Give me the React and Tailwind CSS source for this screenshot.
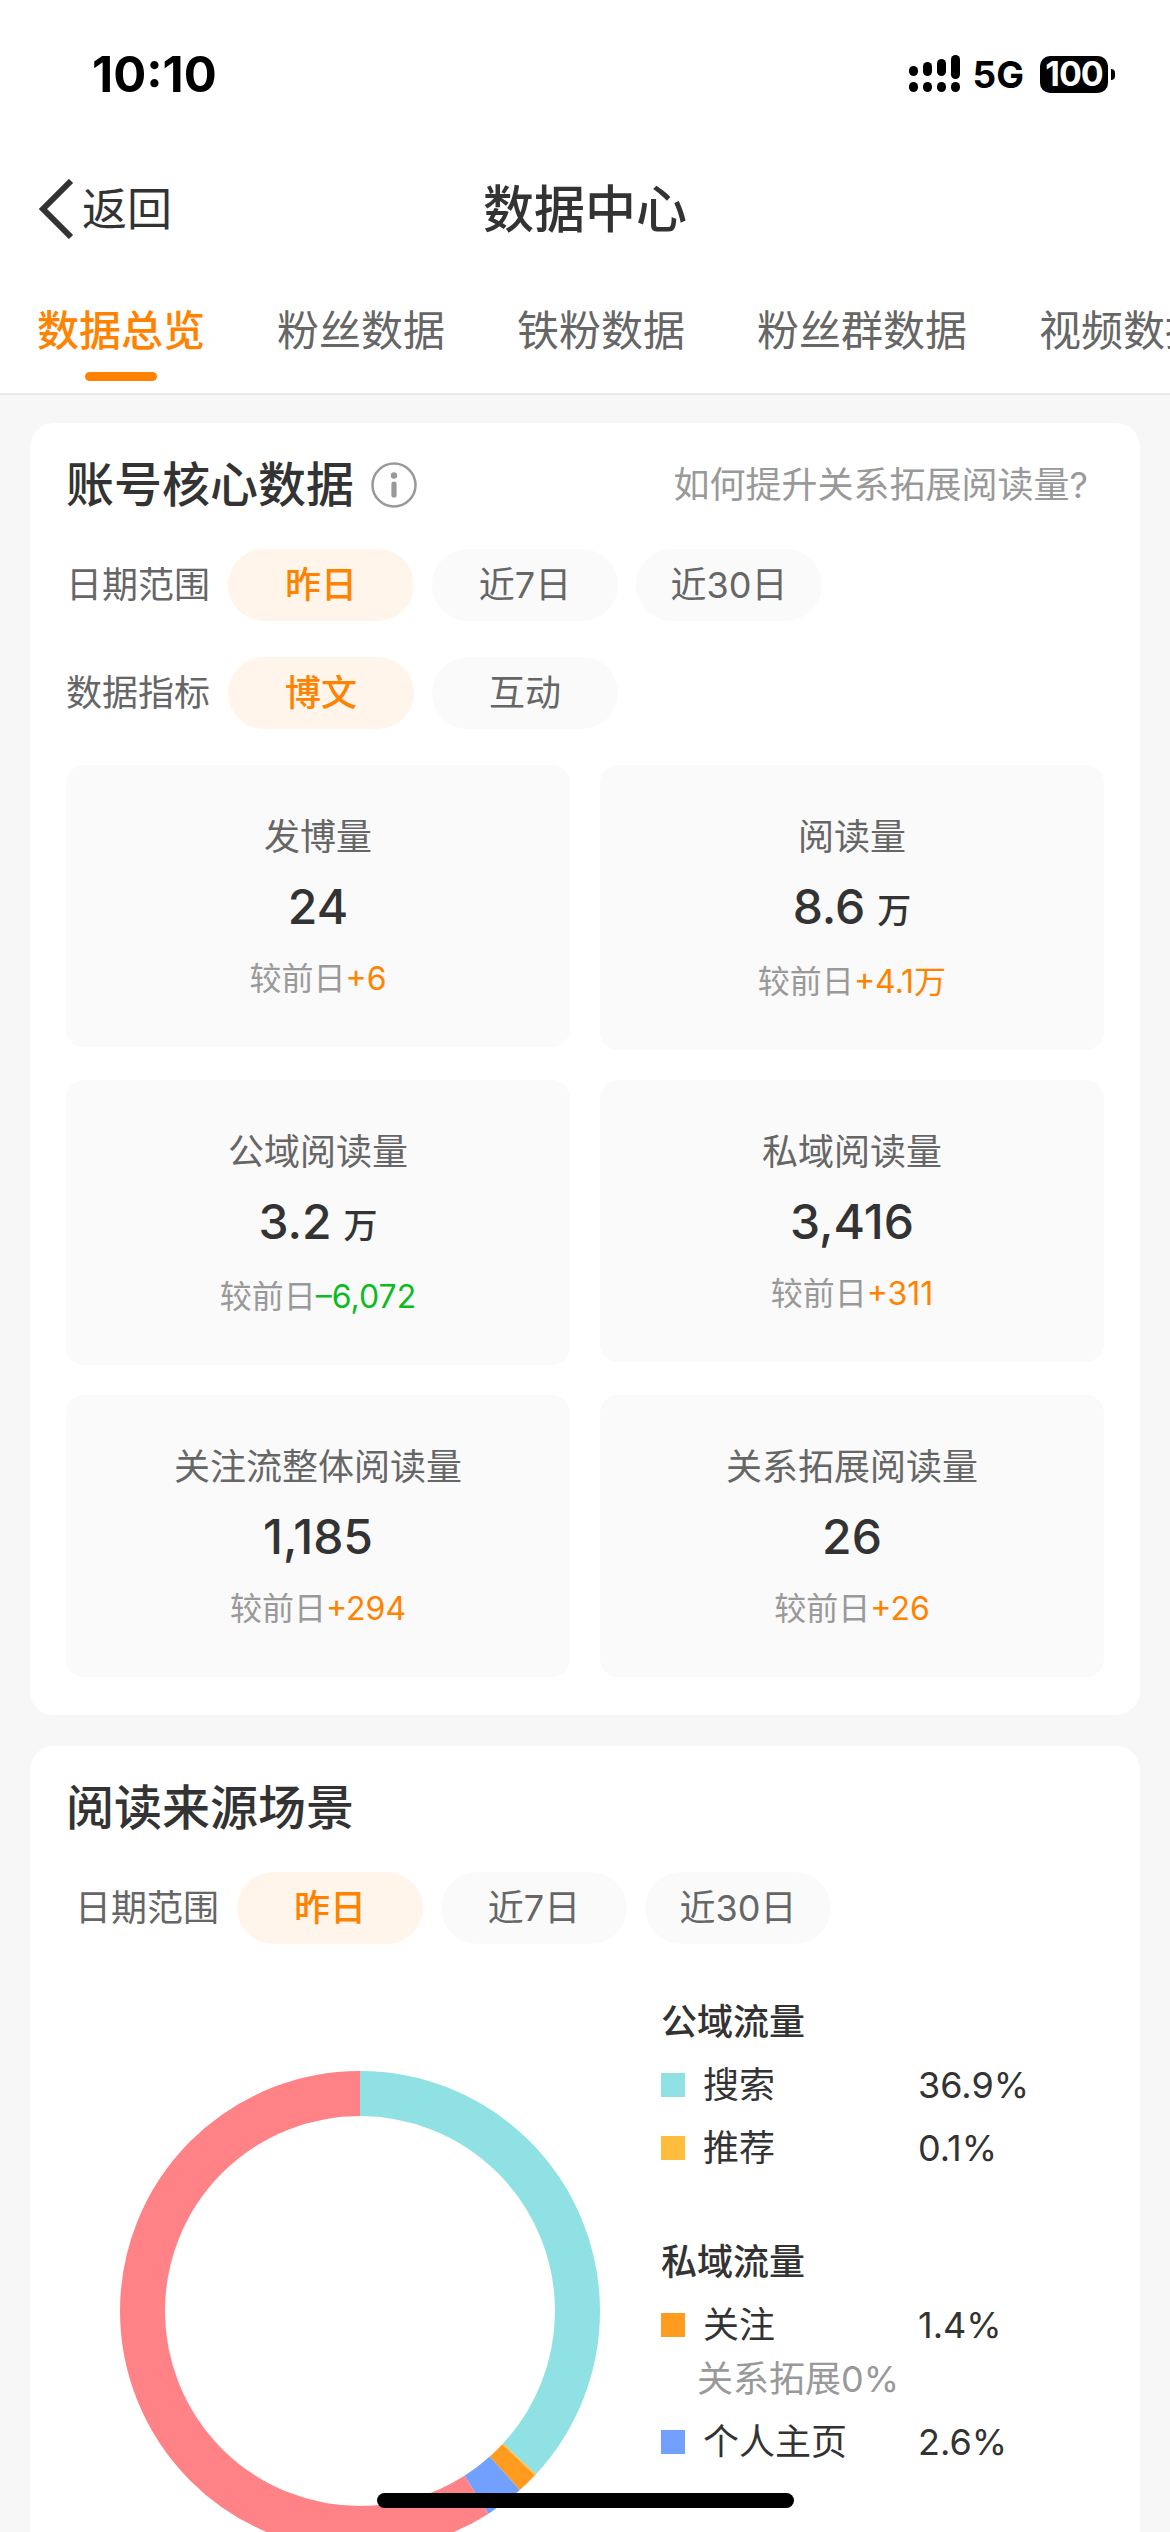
const tabs = ["数据总览", "粉丝数据", "铁粉数据", "粉丝群数据", "视频数据"];

const stats = [
  { label: "发博量", value: "24", delta: "+6" },
  { label: "阅读量", value: "8.6", unit: "万", delta: "+4.1万" },
  { label: "公域阅读量", value: "3.2", unit: "万", delta: "–6,072", down: true },
  { label: "私域阅读量", value: "3,416", delta: "+311" },
  { label: "关注流整体阅读量", value: "1,185", delta: "+294" },
  { label: "关系拓展阅读量", value: "26", delta: "+26" },
];

// percentages clockwise from the top, the rest of the ring is red
const segments = [
  { color: "#8fe1e4", value: 36.9 },
  { color: "#ffbd3d", value: 0.1 },
  { color: "#ff9c1f", value: 1.4 },
  { color: "#71a0ff", value: 2.6 },
  { color: "#ff8287", value: 59 },
];

function StatusBar() {
  return (
    <div className="flex h-[148px] items-center justify-between pl-[92px] pr-[55px] text-black">
      <span className="text-[49px] font-bold leading-none">10:10</span>
      <div className="flex items-center">
        <svg width="52" height="38" viewBox="0 0 52 38" fill="#000">
          <rect x="0" y="11" width="9" height="10" rx="4.5" />
          <rect x="14" y="7" width="9" height="14" rx="4.5" />
          <rect x="28" y="4" width="9" height="17" rx="4.5" />
          <rect x="42" y="0" width="9" height="24" rx="4.5" />
          <rect x="0" y="27" width="9" height="10" rx="4.5" />
          <rect x="14" y="27" width="9" height="10" rx="4.5" />
          <rect x="28" y="27" width="9" height="10" rx="4.5" />
          <rect x="42" y="27" width="9" height="10" rx="4.5" />
        </svg>
        <span className="ml-[12px] text-[37px] font-bold leading-none">5G</span>
        <div className="ml-[16px] flex h-[37px] w-[68px] items-center justify-center rounded-[10px] bg-black text-[34px] font-bold leading-none tracking-[-1px] text-white">
          100
        </div>
        <div className="ml-[3px] h-[11px] w-[4px] rounded-r-full bg-black" />
      </div>
    </div>
  );
}

function NavBar() {
  return (
    <div className="grid h-[120px] grid-cols-3 items-center pt-[2px] text-[#333]">
      <div className="flex items-center pl-[38px]">
        <svg width="36" height="60" viewBox="0 0 36 60" fill="none" stroke="#333" strokeWidth="6">
          <polyline points="33,2 5,30 33,58" />
        </svg>
        <span className="ml-[8px] text-[45px] leading-none">返回</span>
      </div>
      <div className="text-center text-[51px] font-medium leading-none">数据中心</div>
    </div>
  );
}

function Tabs() {
  return (
    <div className="flex gap-[72px] overflow-hidden border-b-2 border-[#e8e8e8] pl-[37px] pt-[38px]">
      {tabs.map((tab, index) => (
        <div key={tab} className="flex shrink-0 flex-col items-center">
          <span className={`text-[42px] leading-[50px] ${index === 0 ? "font-medium text-[#ff8200]" : "text-[#666]"}`}>
            {tab}
          </span>
          <div className={`mt-[16px] mb-[12px] h-[9px] w-[72px] rounded-full ${index === 0 ? "bg-[#ff8200]" : "bg-transparent"}`} />
        </div>
      ))}
    </div>
  );
}

function Pill({ text, active }) {
  return (
    <div
      className={`flex h-[72px] w-[186px] items-center justify-center rounded-full text-[36px] ${
        active ? "bg-[#fff5eb] font-medium text-[#ff8200]" : "bg-[#fafafa] text-[#666]"
      }`}
    >
      {text}
    </div>
  );
}

function FilterRow({ label, options, className }) {
  return (
    <div className={`flex items-center gap-[18px] ${className}`}>
      <span className="w-[144px] text-[36px] leading-none text-[#666]">{label}</span>
      {options.map((option, index) => (
        <Pill key={option} text={option} active={index === 0} />
      ))}
    </div>
  );
}

function StatCell({ stat }) {
  return (
    <div className="flex flex-col items-center rounded-[18px] bg-[#fafafa] pb-[46px] pt-[47px]">
      <span className="text-[36px] leading-[50px] text-[#666]">{stat.label}</span>
      <div className={`mt-[15px] box-content flex h-[60px] items-center text-[#333] ${stat.unit ? "pb-[3px]" : ""}`}>
        <span className="text-[48px] font-medium leading-none">{stat.value}</span>
        {stat.unit && <span className="ml-[12px] mt-[8px] text-[34px] font-medium leading-none">{stat.unit}</span>}
      </div>
      <div className="mt-[20px] text-[32px] leading-[44px] text-[#999]">
        较前日
        <span className={stat.down ? "text-[#0cbb1f]" : "text-[#ff8200]"}>{stat.delta}</span>
      </div>
    </div>
  );
}

function CoreCard() {
  return (
    <div className="mx-[30px] mt-[28px] rounded-[24px] bg-white px-[36px] pb-[38px] pt-[31px]">
      <div className="flex h-[60px] items-center justify-between pr-[16px] pt-[2px]">
        <div className="flex items-center">
          <span className="text-[48px] font-medium leading-none text-[#333]">账号核心数据</span>
          <svg className="ml-[17px]" width="46" height="46" viewBox="0 0 46 46">
            <circle cx="23" cy="23" r="21.5" fill="none" stroke="#999" strokeWidth="2.5" />
            <circle cx="23" cy="13.5" r="3.2" fill="#999" />
            <rect x="20.4" y="19.5" width="5.2" height="16" rx="2.6" fill="#999" />
          </svg>
        </div>
        <span className="text-[36px] leading-none text-[#999]">如何提升关系拓展阅读量?</span>
      </div>
      <FilterRow className="mt-[35px]" label="日期范围" options={["昨日", "近7日", "近30日"]} />
      <FilterRow className="mt-[36px]" label="数据指标" options={["博文", "互动"]} />
      <div className="mt-[36px] grid grid-cols-2 items-start gap-[30px]">
        {stats.map((stat) => (
          <StatCell key={stat.label} stat={stat} />
        ))}
      </div>
    </div>
  );
}

function Donut() {
  let offset = 0;
  return (
    <svg className="ml-[54px] mt-[74px] shrink-0" width="480" height="480" viewBox="0 0 480 480">
      <g transform="rotate(-90 240 240)" fill="none" strokeWidth="45">
        {segments.map((segment) => {
          const circle = (
            <circle
              key={segment.color}
              cx="240"
              cy="240"
              r="217.5"
              pathLength="100"
              stroke={segment.color}
              strokeDasharray={`${segment.value} ${100 - segment.value}`}
              strokeDashoffset={-offset}
            />
          );
          offset += segment.value;
          return circle;
        })}
      </g>
    </svg>
  );
}

function LegendRow({ color, name, value, className = "mt-[13px]" }) {
  return (
    <div className={`flex items-center text-[36px] leading-[50px] text-[#333] ${className}`}>
      <div className="h-[24px] w-[24px]" style={{ backgroundColor: color }} />
      <span className="ml-[18px] w-[215px]">{name}</span>
      <span>{value}</span>
    </div>
  );
}

function SourceCard() {
  return (
    <div className="mx-[30px] mt-[31px] rounded-[24px] bg-white px-[36px] pb-[40px] pt-[32px]">
      <div className="text-[48px] font-medium leading-[60px] text-[#333]">阅读来源场景</div>
      <FilterRow className="mt-[34px] pl-[9px]" label="日期范围" options={["昨日", "近7日", "近30日"]} />
      <div className="mt-[53px] flex items-start">
        <Donut />
        <div className="ml-[61px]">
          <div className="text-[36px] font-medium leading-[50px] text-[#333]">公域流量</div>
          <LegendRow color="#8fe1e4" name="搜索" value="36.9%" />
          <LegendRow color="#ffbd3d" name="推荐" value="0.1%" />
          <div className="mt-[64px] text-[36px] font-medium leading-[50px] text-[#333]">私域流量</div>
          <LegendRow color="#ff9c1f" name="关注" value="1.4%" />
          <div className="ml-[36px] mt-[4px] text-[36px] leading-[50px] text-[#999]">关系拓展0%</div>
          <LegendRow color="#71a0ff" name="个人主页" value="2.6%" />
        </div>
      </div>
    </div>
  );
}

export default function App() {
  return (
    <div className="relative h-[2532px] w-[1170px] overflow-hidden bg-[#f7f7f7] font-['Inter','Noto_Sans_CJK_SC',sans-serif]">
      <div className="bg-white">
        <StatusBar />
        <NavBar />
        <Tabs />
      </div>
      <CoreCard />
      <SourceCard />
      <div className="absolute bottom-[24px] left-[377px] h-[15px] w-[417px] rounded-full bg-black" />
    </div>
  );
}
